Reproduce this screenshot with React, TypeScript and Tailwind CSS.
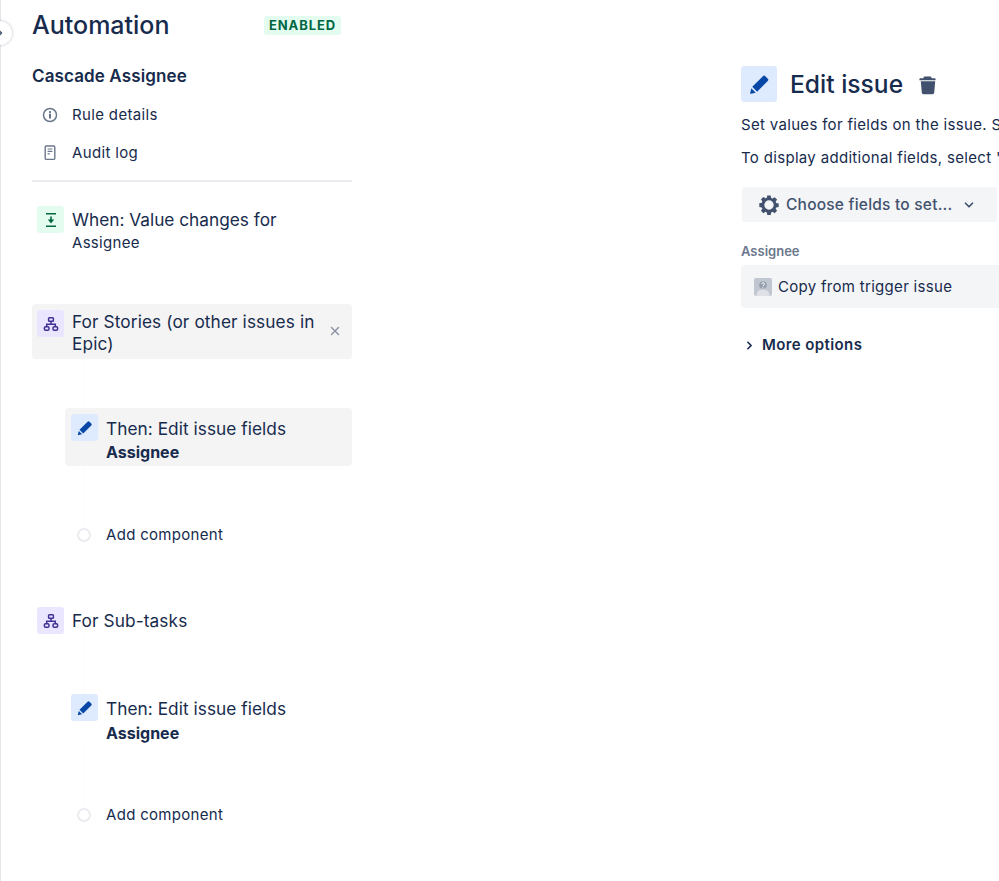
import { ChevronDown, ChevronRight, X } from "lucide-react";

const font = "[font-family:Inter,'Liberation_Sans',sans-serif]";

function PencilIcon({ size = 16 }: { size?: number }) {
  return (
    <svg width={size} height={size} viewBox="0 0 16 16" fill="#0747a6">
      <path d="M10.6 1.7a1.3 1.3 0 0 1 1.85 0l1.85 1.85a1.3 1.3 0 0 1 0 1.85L6.2 13.5 2.5 9.8z" />
      <path d="M1.8 10.9l3.3 3.3-3.6.9a.5.5 0 0 1-.6-.6z" />
    </svg>
  );
}

function TreeIcon() {
  return (
    <svg width="16" height="16" viewBox="0 0 16 16" fill="none" stroke="#403294" strokeWidth="1.5">
      <rect x="5.6" y="1.8" width="4.8" height="3.4" rx="0.8" />
      <rect x="1.4" y="10.8" width="4.6" height="3.4" rx="1.2" />
      <rect x="10" y="10.8" width="4.6" height="3.4" rx="1.2" />
      <path d="M8 5.2v3M3.7 10.8V8.2h8.6v2.6" />
    </svg>
  );
}

function TriggerIcon() {
  return (
    <svg width="16" height="16" viewBox="0 0 16 16" fill="none">
      <path d="M3 1.8h10M3 14.2h10" stroke="#006644" strokeWidth="1.5" />
      <path d="M8 4.5v4" stroke="#006644" strokeWidth="1.6" />
      <path d="M4.8 7.6h6.4L8 11.4z" fill="#006644" />
    </svg>
  );
}

function InfoIcon() {
  return (
    <svg width="16" height="16" viewBox="0 0 16 16" fill="none">
      <circle cx="8" cy="8" r="6.5" stroke="#6b778c" strokeWidth="1.5" />
      <path d="M8 7.4v3.6" stroke="#42526e" strokeWidth="1.6" strokeLinecap="round" />
      <circle cx="8" cy="5" r="1" fill="#42526e" />
    </svg>
  );
}

function PageIcon() {
  return (
    <svg width="16" height="16" viewBox="0 0 16 16" fill="none">
      <rect x="3.2" y="1" width="9.6" height="13.4" rx="1.2" stroke="#6b778c" strokeWidth="1.4" />
      <path d="M5.6 4h4.8M5.6 6.4h4.8M5.6 8.8h2.2" stroke="#6b778c" strokeWidth="1.2" />
    </svg>
  );
}

function TrashIcon() {
  return (
    <svg width="18" height="20" viewBox="0 0 18 20" fill="#42526e">
      <path d="M6.6 1.6h4.8a1 1 0 0 1 1 .9l.1.7h3.2c.5 0 .9.4.9.9v1.1H.4V4.100c0-.5.4-.9.9-.9h3.200l.1-.7a1 1 0 0 1 1-.9z" />
      <path d="M1.800 6.200h14.400l-1 11.600a1.600 1.600 0 0 1-1.600 1.400H4.400a1.600 1.600 0 0 1-1.600-1.400z" />
    </svg>
  );
}

function GearIcon() {
  return (
    <svg width="20" height="20" viewBox="0 0 20 20" fill="#42526e">
      <path
        fillRule="evenodd"
        d="M8.300.5h3.400l.5 2.500 1.300.55 2.150-1.400 2.400 2.400-1.400 2.150.55 1.300 2.500.5v3.400l-2.500.5-.55 1.300 1.400 2.150-2.400 2.400-2.150-1.400-1.300.55-.5 2.500H8.300l-.5-2.500-1.300-.55-2.150 1.400-2.400-2.400 1.400-2.150-.55-1.300-2.500-.5V8.300l2.500-.5.55-1.300-1.400-2.150 2.400-2.400 2.150 1.400 1.300-.55zM10 5.300a4.700 4.700 0 1 0 0 9.400 4.700 4.700 0 0 0 0-9.400z"
      />
    </svg>
  );
}

function IconTile({ bg, children }: { bg: string; children: React.ReactNode }) {
  return (
    <div className={`flex h-[27px] w-[27px] shrink-0 items-center justify-center rounded-[3px] ${bg}`}>
      {children}
    </div>
  );
}

function AddComponent() {
  return (
    <div className="flex h-[20px] items-center pl-[45px]">
      <div className="h-[14px] w-[14px] rounded-full border-2 border-[#ebecf0] bg-white" />
      <span className="ml-[15px] text-[15px] leading-[20px] tracking-[0.3px] text-[#172b4d]">Add component</span>
    </div>
  );
}

function Connector({ height }: { height: string }) {
  return (
    <div className={`ml-[52px] border-l border-[#fafbfc] ${height}`} />
  );
}

export default function App() {
  return (
    <div className={`relative flex h-[881px] w-[999px] overflow-hidden bg-white ${font}`}>
      {/* sidebar edge + collapse button */}
      <div className="w-[1px] shrink-0 bg-[#e4e6ea]" />
      <div className="absolute left-[-12px] top-[21px] flex h-[24px] w-[24px] items-center justify-center rounded-full bg-white shadow-[0_0_3px_rgba(9,30,66,0.3)]">
        <ChevronRight size={12} strokeWidth={3} color="#42526e" />
      </div>

      {/* rule column */}
      <div className="ml-[31px] w-[320px] shrink-0">
        <div className="flex h-[30px] mt-[10px] items-center justify-between pr-[11px]">
          <h1 className="text-[25px] font-medium leading-[30px] text-[#172b4d]">Automation</h1>
          <span className="rounded-[3px] bg-[#e3fcef] px-[5px] text-[13px] font-bold leading-[19px] tracking-[0.9px] text-[#006644]">
            ENABLED
          </span>
        </div>

        <h2 className="mt-[25px] text-[17px] font-semibold leading-[22px] tracking-[0.12px] text-[#172b4d]">Cascade Assignee</h2>

        <div className="mt-[16px] flex h-[24px] items-center pl-[10px]">
          <InfoIcon />
          <span className="ml-[14px] text-[15px] tracking-[0.35px] text-[#172b4d]">Rule details</span>
        </div>
        <div className="mt-[14px] flex h-[24px] items-center pl-[10px]">
          <PageIcon />
          <span className="ml-[14px] text-[15px] tracking-[0.35px] text-[#172b4d]">Audit log</span>
        </div>

        <div className="mt-[15px] h-[2px] bg-[#ebecf0]" />

        <div className="mt-[24px] flex pl-[5px]">
          <IconTile bg="bg-[#e3fcef]">
            <TriggerIcon />
          </IconTile>
          <div className="ml-[8px]">
            <div className="text-[17.250px] leading-[28px] text-[#172b4d]">When: Value changes for</div>
            <div className="text-[15px] leading-[18px] tracking-[0.3px] text-[#172b4d]">Assignee</div>
          </div>
        </div>

        <div className="mt-[52px] flex h-[55px] rounded-[4px] bg-[#f4f4f5] pl-[5px] pt-[6px]">
          <IconTile bg="bg-[#eae6ff]">
            <TreeIcon />
          </IconTile>
          <div className="ml-[8px] mt-[1px] w-[250px] text-[17.250px] leading-[22px] tracking-[0.1px] text-[#172b4d]">
            For Stories (or other issues in Epic)
          </div>
          <X size={14} strokeWidth={2.500} color="#8993a4" className="ml-[6px] mt-[14px]" />
        </div>

        <Connector height="h-[49px]" />

        <div className="ml-[33px] flex h-[58px] rounded-[4px] bg-[#f4f4f5] pl-[6px] pt-[6px]">
          <IconTile bg="bg-[#deebff]">
            <PencilIcon />
          </IconTile>
          <div className="ml-[8px]">
            <div className="text-[17.250px] leading-[30px] tracking-[0.05px] text-[#172b4d]">Then: Edit issue fields</div>
            <div className="text-[16px] font-bold leading-[16px] text-[#172b4d]">Assignee</div>
          </div>
        </div>

        <Connector height="h-[59px]" />
        <AddComponent />

        <div className="mt-[62px] flex items-center pl-[5px]">
          <IconTile bg="bg-[#eae6ff]">
            <TreeIcon />
          </IconTile>
          <span className="ml-[8px] text-[17.250px] leading-[27px] tracking-[0.1px] text-[#172b4d]">For Sub-tasks</span>
        </div>

        <Connector height="h-[60px]" />

        <div className="ml-[33px] flex pl-[6px]">
          <IconTile bg="bg-[#deebff]">
            <PencilIcon />
          </IconTile>
          <div className="ml-[8px] mt-[1px]">
            <div className="text-[17.250px] leading-[28px] tracking-[0.05px] text-[#172b4d]">Then: Edit issue fields</div>
            <div className="text-[16px] font-bold leading-[20px] text-[#172b4d]">Assignee</div>
          </div>
        </div>

        <Connector height="h-[62px]" />
        <AddComponent />
      </div>

      {/* component config column */}
      <div className="ml-[389px] w-[258px] shrink-0">
        <div className="mt-[66px] flex h-[36px] items-center">
          <div className="flex h-[36px] w-[36px] items-center justify-center rounded-[3px] bg-[#deebff]">
            <PencilIcon size={21} />
          </div>
          <h2 className="ml-[13px] whitespace-nowrap text-[24.600px] font-medium leading-[30px] text-[#172b4d]">Edit issue</h2>
          <span className="ml-[16px] mt-[1px]">
            <TrashIcon />
          </span>
        </div>

        <p className="mt-[13px] whitespace-nowrap text-[15px] leading-[20px] tracking-[0.32px] text-[#172b4d]">
          Set values for fields on the issue. Select
        </p>
        <p className="mt-[13px] whitespace-nowrap text-[15px] leading-[20px] tracking-[0.32px] text-[#172b4d]">
          To display additional fields, select 'More options'
        </p>

        <div className="ml-[1px] mt-[19px] flex h-[35px] w-[255px] items-center rounded-[3px] bg-[#f4f5f7] pl-[17px]">
          <GearIcon />
          <span className="ml-[7px] mt-[1px] text-[15.500px] font-medium tracking-[0.22px] text-[#42526e]">Choose fields to set...</span>
          <ChevronDown size={14} strokeWidth={3} color="#42526e" className="ml-[10px]" />
        </div>

        <div className="mt-[20px] text-[13px] font-semibold leading-[18px] text-[#6b778c]">Assignee</div>

        <div className="mt-[5px] flex h-[43px] w-[300px] items-center rounded-[4px] bg-[#f4f5f7] pl-[13px]">
          <svg width="18" height="18" viewBox="0 0 18 18" className="shrink-0">
            <rect width="18" height="18" rx="2" fill="#c1c7d0" />
            <circle cx="9" cy="7" r="3.800" fill="#97a0af" />
            <path d="M2.500 18c0-4.500 3-6.500 6.500-6.500s6.500 2 6.500 6.500z" fill="#dfe1e6" />
            <path d="M7.600 5.800c.2-1.600 2.900-1.400 2.800.2 0 1-1.400 1.100-1.400 2.200" fill="none" stroke="#fff" strokeWidth="0.9" />
            <circle cx="9" cy="9.800" r="0.600" fill="#fff" />
          </svg>
          <span className="ml-[6px] mt-[2px] whitespace-nowrap text-[15px] tracking-[0.3px] text-[#172b4d]">Copy from trigger issue</span>
        </div>

        <div className="mt-[26px] flex h-[22px] items-center">
          <ChevronRight size={13} strokeWidth={3} color="#172b4d" className="ml-[2px]" />
          <span className="ml-[6px] text-[15px] font-semibold tracking-[0.4px] text-[#172b4d]">More options</span>
        </div>
      </div>
    </div>
  );
}
